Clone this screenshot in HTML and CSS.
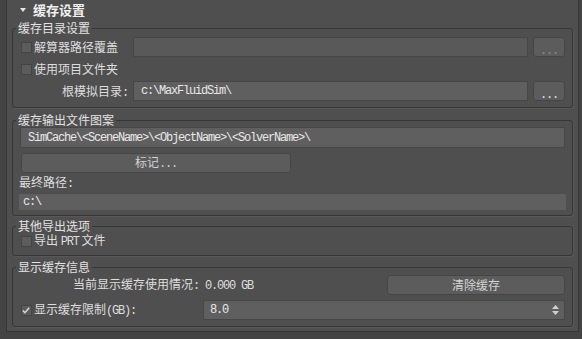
FILE: index.html
```html
<!DOCTYPE html>
<html>
<head>
    <title>缓存设置</title>
    <link rel="stylesheet" href="styles.css">
</head>
<body>
    <div class="rollout">
        <div class="rollout-header">
            <span class="arrow"></span>
            <span class="rollout-title">缓存设置</span>
            <span class="grip"></span>
        </div>

        <!-- 缓存目录 -->
        <fieldset class="group group-dir">
            <legend>缓存目录设置</legend>
            <div class="dir-grid">
                <label class="check"><span class="box"></span><span>解算器路径覆盖</span></label>
                <div class="field disabled"></div>
                <button class="btn browse disabled" type="button"><span class="mono">...</span></button>

                <label class="check"><span class="box"></span><span>使用项目文件夹</span></label>
                <div></div>
                <div></div>

                <span class="right-label">根模拟目录<span class="mono">:</span></span>
                <div class="field"><span class="mono">c:\MaxFluidSim\</span></div>
                <button class="btn browse" type="button"><span class="mono">...</span></button>
            </div>
        </fieldset>

        <!-- 输出文件图案 -->
        <fieldset class="group group-pattern">
            <legend>缓存输出文件图案</legend>
            <div class="field pattern"><span class="mono">SimCache\&lt;SceneName&gt;\&lt;ObjectName&gt;\&lt;SolverName&gt;\</span></div>
            <button class="btn tag-btn" type="button">标记<span class="mono">...</span></button>
            <div class="final-label">最终路径<span class="mono">:</span></div>
            <div class="field final"><span class="mono">c:\</span></div>
        </fieldset>

        <fieldset class="group group-export">
            <legend>其他导出选项</legend>
            <label class="check"><span class="box"></span><span>导出 <span class="mono">PRT</span> 文件</span></label>
        </fieldset>

        <fieldset class="group group-info">
            <legend>显示缓存信息</legend>
            <div class="info-row">
                <span class="usage">当前显示缓存使用情况<span class="mono">: 0.000 GB</span></span>
                <button class="btn clear-btn" type="button">清除缓存</button>
            </div>
            <div class="info-row limit-row">
                <label class="check limit-label"><span class="box checked">
                    <svg width="11" height="11" viewBox="0 0 11 11"><path d="M2 5.5 L4.3 8 L9 2.5" fill="none" stroke="#d8d8d8" stroke-width="1.6"/></svg>
                </span><span>显示缓存限制<span class="mono">(GB):</span></span></label>
                <div class="field spinner">
                    <span class="mono">8.0</span>
                    <svg class="spin-arrows" width="7" height="10" viewBox="0 0 7 10"><path d="M3.5 0 L7 4 L0 4 Z M0 6 L7 6 L3.5 10 Z" fill="#d0d0d0"/></svg>
                </div>
            </div>
        </fieldset>
    </div>
</body>
</html>
```

FILE: styles.css
```css
body {
    margin: 0;
    background-color: #444444;
    font-family: "Noto Sans CJK SC", "Noto Sans", sans-serif;
    font-size: 12px;
    line-height: 14px;
    color: #dedede;
}

.mono {
    font-family: "Liberation Mono", monospace;
    font-size: 12px;
    letter-spacing: -1.2px;
}

.rollout {
    margin-left: 6px;
    width: 573px;
    height: 332px;
    background-color: #4f4f4f;
    border: 1px solid #363636;
    border-top: none;
    padding: 0 5px;
    box-sizing: border-box;
}

.rollout-header {
    height: 21px;
    display: flex;
    align-items: center;
    padding-left: 8px;
}

.arrow {
    width: 0;
    height: 0;
    border-left: 3px solid transparent;
    border-right: 3px solid transparent;
    border-top: 4px solid #e8e8e8;
    margin-right: 7px;
    margin-top: -2px;
}

.rollout-title {
    font-size: 13px;
    font-weight: bold;
    color: #f0f0f0;
    line-height: 15px;
    margin-top: -3px;
}

.grip {
    margin-left: auto;
    margin-right: 1px;
    margin-top: -7px;
    width: 5px;
    height: 5px;
    background-image: radial-gradient(circle, #a0a0a0 0.6px, transparent 0.7px);
    background-size: 2px 2px;
}

.group {
    margin: 0;
    padding: 0 7px;
    border: 1px solid #363636;
    border-radius: 3px;
    box-shadow: 1px 1px 0 #585858;
    box-sizing: border-box;
    min-width: 0;
}

.group legend {
    padding: 0 2px;
    margin-left: -4px;
    line-height: 14px;
    height: 14px;
    color: #e2e2e2;
}

.check {
    display: flex;
    align-items: center;
    white-space: nowrap;
    line-height: 14px;
}

.box {
    width: 11px;
    height: 11px;
    box-sizing: border-box;
    border: 1px solid #444;
    background-color: #5c5c5c;
    margin-left: 1px;
    margin-right: 2px;
    display: flex;
}

.field {
    background-color: #5f5f5f;
    border: 1px solid #464646;
    box-sizing: border-box;
    display: flex;
    align-items: center;
    color: #e8e8e8;
}

.field.disabled {
    background-color: #595959;
}

.btn {
    background-color: #5c5c5c;
    border: 1px solid #454545;
    border-radius: 3px;
    color: #d4d4d4;
    font-family: inherit;
    font-size: 12px;
    line-height: 14px;
    padding: 0;
    box-sizing: border-box;
}

/* directory group */
.group-dir {
    height: 87px;
    padding-top: 2px;
}

.dir-grid {
    display: grid;
    grid-template-columns: 108px 1fr 32px;
    grid-auto-rows: 20px;
    column-gap: 5px;
    row-gap: 2px;
}

.dir-grid .field {
    padding-left: 7px;
}

.browse {
    color: #e0e0e0;
    padding-top: 4px;
}

.browse.disabled {
    color: #8c8c8c;
}

.right-label {
    text-align: right;
    line-height: 20px;
}

/* pattern group */
.group-pattern {
    margin-top: 5px;
    height: 103px;
}

.pattern {
    height: 21px;
    padding-left: 7px;
}

.tag-btn {
    display: block;
    margin: 5px 0 0 1px;
    width: 270px;
    height: 20px;
}

.final-label {
    margin-top: 2px;
    line-height: 14px;
    margin-left: -1px;
}

.final {
    height: 16px;
    margin: 3px -1px 0 -1px;
    padding-left: 4px;
    border: none;
}

/* export group */
.group-export {
    margin-top: 3px;
    height: 37px;
    padding-top: 1px;
}

.group-export .check {
    height: 14px;
}

/* info group */
.group-info {
    margin-top: 4px;
    height: 67px;
    padding-top: 1px;
}

.info-row {
    display: flex;
    align-items: center;
    height: 20px;
}

.usage {
    margin-left: 53px;
    flex: 1;
}

.clear-btn {
    width: 178px;
    height: 20px;
}

.limit-row {
    margin-top: 5px;
}

.limit-label {
    width: 178px;
    margin-right: 5px;
}

.box.checked svg {
    margin: -1px 0 0 -1px;
}

.spinner {
    flex: 1;
    height: 20px;
    padding-left: 6px;
    padding-right: 5px;
    justify-content: space-between;
}
```
